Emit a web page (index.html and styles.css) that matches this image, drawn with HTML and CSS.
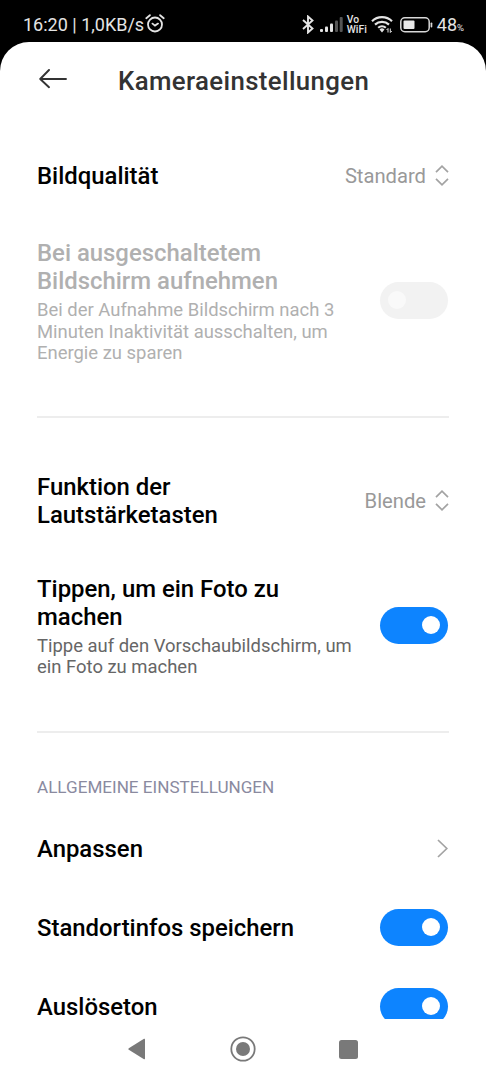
FILE: index.html
```html
<!DOCTYPE html>
<html lang="de">
<head>
    <meta charset="UTF-8">
    <meta name="viewport" content="width=device-width, initial-scale=1.0">
    <title>Kameraeinstellungen</title>
    <link rel="stylesheet" href="styles.css">
</head>
<body>

    <div class="statusbar">
        <span class="time">16:20 | 1,0KB/s</span>
        <svg class="alarm" width="20" height="20" viewBox="0 0 20 20" fill="none" stroke="#e4e4e4" stroke-width="1.8" stroke-linecap="round">
            <circle cx="10" cy="10.5" r="7"/>
            <path d="M7.5 9.6l2.500 2 3-2M1.300 4.200l3.600-3M18.700 4.200l-3.600-3"/>
        </svg>
        <div class="status-icons">
            <svg class="bluetooth" width="12" height="19" viewBox="0 0 12 19" fill="none" stroke="#e4e4e4" stroke-width="1.9">
                <path d="M1 5l9.5 8.500L6 17.500v-16l4.500 4L1 14"/>
            </svg>
            <svg class="signal" width="23" height="15" viewBox="0 0 23 15" fill="#e4e4e4">
                <rect x="0" y="12" width="3" height="3" rx="1"/>
                <rect x="5" y="9.5" width="3" height="5.5" rx="1"/>
                <rect x="10" y="6.5" width="3" height="8.5" rx="1"/>
                <rect x="15" y="3.5" width="3" height="11.5" rx="1" fill="#555"/>
                <rect x="19.700" y="0" width="3" height="15" rx="1" fill="#555"/>
            </svg>
            <span class="vowifi"><span>Vo</span><span>WiFi</span></span>
            <svg class="wifi" width="22" height="18" viewBox="0 0 22 18" fill="none" stroke="#e4e4e4" stroke-width="2.200">
                <path d="M1 6.200a14.500 14.500 0 0 1 20 0M4 9.600a10.200 10.200 0 0 1 14 0M7.200 12.800a5.600 5.600 0 0 1 7.600 0"/>
                <path d="M8.500 14.600L11 17.500l2.500-2.900a3.500 3.500 0 0 0-5 0z" fill="#e4e4e4" stroke="none"/>
                <path d="M17 17.500v-4l-1.500 1.500M19.300 13.500v4l1.500-1.500" stroke-width="1"/>
            </svg>
            <svg class="battery" width="33" height="16" viewBox="0 0 33 16">
                <rect x=".8" y=".8" width="28.4" height="13.900" rx="4" fill="none" stroke="#d8d8d8" stroke-width="1.500"/>
                <rect x="3.500" y="3.500" width="11" height="8.500" rx="1" fill="#e8e8e8"/>
                <rect x="30.600" y="5.500" width="1.700" height="5" rx=".8" fill="#d8d8d8"/>
            </svg>
            <span class="percent">48<small>%</small></span>
        </div>
    </div>

    <div class="screen">
        <header>
            <svg width="28" height="20" viewBox="0 0 28 20" fill="none" stroke="#333" stroke-width="1.9" stroke-linecap="round" stroke-linejoin="round">
                <path d="M27 10H1.200M10 1L1.200 10l8.800 8.200"/>
            </svg>
            <h1>Kameraeinstellungen</h1>
        </header>

        <main>
            <section class="group first">
                <div class="row single">
                    <h2>Bildqualität</h2>
                    <span class="value">Standard</span>
                    <svg class="updown" width="14" height="21" viewBox="0 0 14 21"><path d="M1 7.200L7 1.200l6 6M1 13.800l6 6 6-6"/></svg>
                </div>
                <div class="row disabled">
                    <div class="text">
                        <h2>Bei ausgeschaltetem<br>Bildschirm aufnehmen</h2>
                        <p>Bei der Aufnahme Bildschirm nach 3<br>Minuten Inaktivität ausschalten, um<br>Energie zu sparen</p>
                    </div>
                    <span class="toggle"></span>
                </div>
            </section>

            <section class="group second">
                <div class="row">
                    <h2>Funktion der<br>Lautstärketasten</h2>
                    <span class="value">Blende</span>
                    <svg class="updown" width="14" height="21" viewBox="0 0 14 21"><path d="M1 7.200L7 1.200l6 6M1 13.800l6 6 6-6"/></svg>
                </div>
                <div class="row">
                    <div class="text">
                        <h2>Tippen, um ein Foto zu<br>machen</h2>
                        <p>Tippe auf den Vorschaubildschirm, um<br>ein Foto zu machen</p>
                    </div>
                    <span class="toggle on"></span>
                </div>
            </section>

            <section class="group general">
                <h3>ALLGEMEINE EINSTELLUNGEN</h3>
                <div class="row single">
                    <h2>Anpassen</h2>
                    <svg class="chevron" width="11" height="19" viewBox="0 0 11 19"><path d="M1 1l8.800 8.500L1 18"/></svg>
                </div>
                <div class="row single">
                    <h2>Standortinfos speichern</h2>
                    <span class="toggle on"></span>
                </div>
                <div class="row single">
                    <h2>Auslöseton</h2>
                    <span class="toggle on"></span>
                </div>
            </section>
        </main>

        <nav>
            <svg width="18" height="22" viewBox="0 0 18 22"><path d="M.8 10.2L16 .8q1-.5 1 .6v19.2q0 1.1-1 .6L.8 11.8q-1-.8 0-1.6z" fill="#797979"/></svg>
            <svg width="26" height="26" viewBox="0 0 26 26"><circle cx="13" cy="13" r="11.7" fill="none" stroke="#797979" stroke-width="1.8"/><circle cx="13" cy="13" r="7" fill="#797979"/></svg>
            <svg width="19" height="19" viewBox="0 0 19 19"><rect width="19" height="19" rx="2.5" fill="#797979"/></svg>
        </nav>
    </div>

</body>
</html>
```
FILE: styles.css
```css
*{
    box-sizing: border-box;
}
body{
    margin: 0;
    height: 1080px;
    overflow: hidden;
    display: flex;
    flex-direction: column;
    background: #000;
    font-family: Roboto, sans-serif;
}
h1, h2, h3, p{
    margin: 0;
}
svg{
    display: block;
    flex: none;
}

/* status bar */
.statusbar{
    display: flex;
    align-items: center;
    height: 42px;
    padding: 7px 22px 0 23px;
    color: #e4e4e4;
    font-size: 18px;
    white-space: nowrap;
}
.time{
    width: 119px;
}
.alarm{
    margin: -2px 0 0 3px;
}
.status-icons{
    display: flex;
    align-items: center;
    margin-left: auto;
}
.signal{
    margin: 0 4px 0 6px;
}
.vowifi{
    display: flex;
    flex-direction: column;
    width: 20px;
    font-size: 10.3px;
    font-weight: 500;
    line-height: 9.5px;
}
.vowifi span{
    height: 9.5px;
}
.wifi{
    margin: -1px 7px 0 4px;
}
.percent{
    margin-left: 4px;
    line-height: 24px;
}
.percent small{
    font-size: 9.5px;
    line-height: 1;
}

/* page */
.screen{
    flex: 1;
    min-height: 0;
    display: flex;
    flex-direction: column;
    background: #fff;
    border-radius: 29px 29px 0 0;
}
header{
    flex: none;
    display: flex;
    align-items: center;
    height: 78px;
    padding-left: 39px;
}
header svg{
    margin-top: -4px;
}
h1{
    margin-left: 51px;
    color: #333;
    font-size: 25.8px;
    font-weight: 500;
    letter-spacing: .37px;
}
main{
    flex: 1;
    min-height: 0;
    overflow: hidden;
    padding: 16px 37px 0;
}
.group{
    border-bottom: 2px solid #ededed;
}
.first{
    padding-bottom: 28px;
}
.second{
    padding: 32px 0 30px;
}
.general{
    border: 0;
    padding-top: 43px;
}

.row{
    display: flex;
    align-items: center;
    padding: 23px 0;
}
.row.single{
    height: 79px;
    padding: 0;
}
.row.disabled{
    padding: 24px 0;
}
h2{
    margin-right: auto;
    font-size: 23.9px;
    font-weight: 500;
    line-height: 28px;
}
h3{
    margin-bottom: 12px;
    color: #8a8a9f;
    font-size: 17.1px;
    font-weight: 400;
    line-height: 22px;
}
.text{
    margin-right: auto;
    white-space: nowrap;
}
p{
    margin: 5px 0 -1px;
    color: #666;
    font-size: 18.45px;
    line-height: 21.6px;
}
.disabled h2, .disabled p{
    color: #b0b0b0;
}
.value{
    color: #999;
    font-size: 20.2px;
}
.updown{
    margin-left: 9px;
}
.updown path, .chevron path{
    fill: none;
    stroke: #a3a3a3;
    stroke-width: 1.7;
}
.chevron{
    margin: -2px 1px 0 0;
}

.toggle{
    flex: none;
    display: flex;
    align-items: center;
    width: 68px;
    height: 37px;
    margin: -2px 1px 0 0;
    padding: 0 8px;
    border-radius: 19px;
    background: #f2f2f2;
}
.toggle:before{
    content: '';
    width: 18px;
    height: 18px;
    border-radius: 50%;
    background: #f9f9f9;
}
.toggle.on{
    justify-content: flex-end;
    background: #0d84ff;
}
.toggle.on:before{
    background: #fff;
}

/* navigation buttons */
nav{
    flex: none;
    display: flex;
    justify-content: space-between;
    align-items: center;
    height: 61px;
    padding: 0 128px 1px;
}
```
